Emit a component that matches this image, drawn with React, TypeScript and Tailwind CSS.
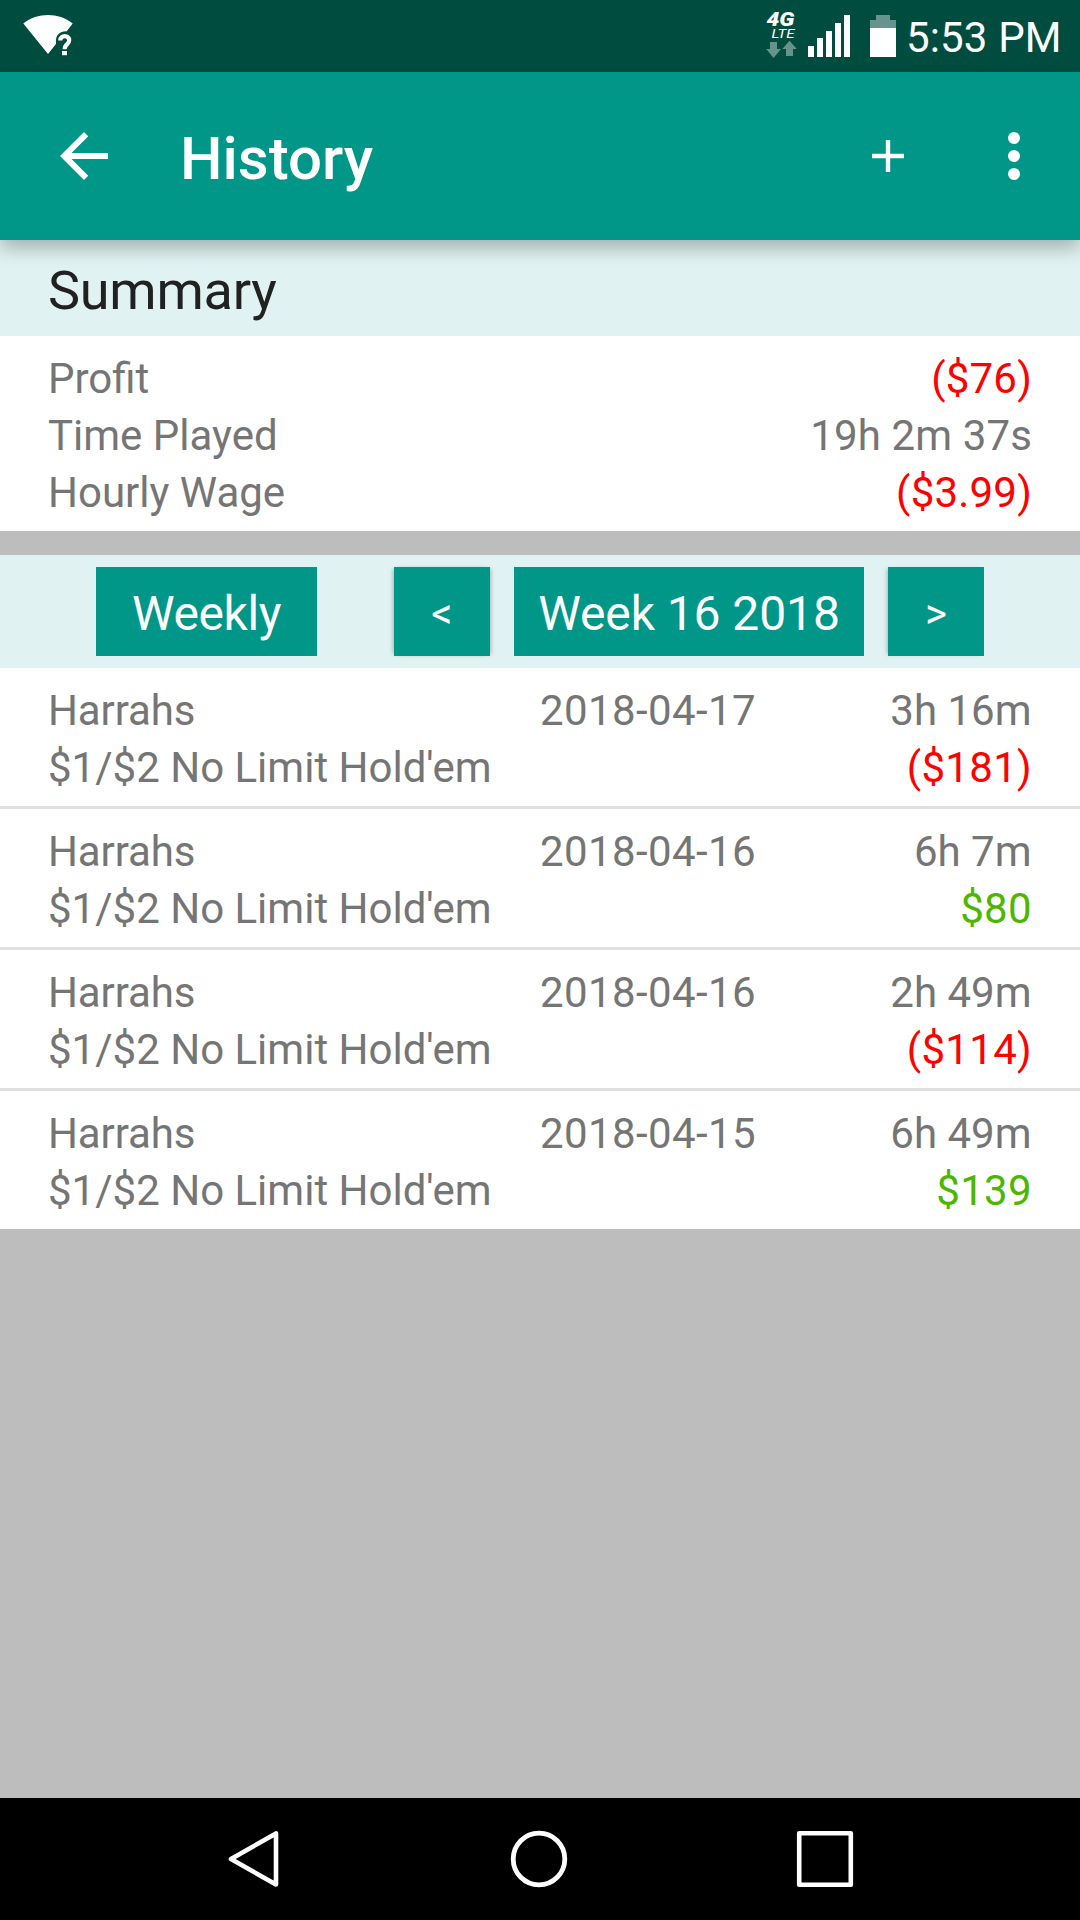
import React from "react";

type Session = { date: string; time: string; amount: string; win: boolean };

const sessions: Session[] = [
  { date: "2018-04-17", time: "3h 16m", amount: "($181)", win: false },
  { date: "2018-04-16", time: "6h 7m", amount: "$80", win: true },
  { date: "2018-04-16", time: "2h 49m", amount: "($114)", win: false },
  { date: "2018-04-15", time: "6h 49m", amount: "$139", win: true },
];

function StatusBar() {
  return (
    <div className="flex h-[72px] shrink-0 items-center bg-[#004d40] pl-5 text-white">
      <svg width="56" height="72" viewBox="20 0 56 72">
        <path
          d="M23.3 23.4C37.5 12.2 58.5 12.2 72.7 23.4L66.5 31.4C60.5 31 56 35 56 40.5V44L48 54Z"
          fill="currentColor"
        />
        <path d="M60.3 40.4C60.3 34.7 69.2 34.9 69.2 40.3C69.2 44.2 64.6 44.2 64.6 49.2" fill="none" stroke="currentColor" strokeWidth="4.2" />
        <rect x="62" y="51" width="5" height="4.2" fill="currentColor" />
      </svg>
      <svg className="ml-auto" width="84" height="72" viewBox="766 0 84 72">
        <text x="766.5" y="26" fill="currentColor" textLength="28" lengthAdjust="spacingAndGlyphs" className="font-[Roboto] text-[20px] font-black italic">4G</text>
        <text x="771.5" y="38" fill="currentColor" textLength="23" lengthAdjust="spacingAndGlyphs" className="font-[Roboto] text-[13.5px] italic">LTE</text>
        <path d="M770 42H777V49H781L773.5 58L766.3 49H770Z" fill="#66948c" />
        <path d="M786 56V49H782.3L789.5 40.7L796.8 49H793V56Z" fill="#66948c" />
        <path d="M808 46h6v11h-6ZM817 38h6v19h-6ZM826 31h6v26h-6ZM835 23h6v34h-6ZM844 15h6v42h-6Z" fill="currentColor" />
      </svg>
      <svg className="ml-5" width="26" height="72" viewBox="870 0 26 72">
        <path d="M876 15h14v5h6v8h-26v-8h6Z" fill="#66948c" />
        <rect x="870" y="28" width="26" height="29" fill="currentColor" />
      </svg>
      <span className="ml-[10px] w-[174px] pt-[3px] text-[42px] leading-[48px] tracking-[0.15px] whitespace-nowrap">5:53 PM</span>
    </div>
  );
}

function AppBar() {
  return (
    <header className="relative z-10 flex h-[168px] shrink-0 items-center bg-[#009688] pr-[30px] pl-12 text-white shadow-[0_8px_18px_rgba(0,0,0,0.27)]">
      <svg width="72" height="72" viewBox="0 0 24 24" fill="currentColor">
        <path d="M20 11H7.83l5.59-5.59L12 4l-8 8 8 8 1.41-1.41L7.83 13H20v-2z" />
      </svg>
      <h1 className="ml-[60px] pt-[6px] text-[60px] leading-[70px] font-medium">History</h1>
      <svg className="ml-auto" width="32" height="32" viewBox="0 0 32 32" fill="currentColor">
        <path d="M13.8 0h4.4v13.8H32v4.4H18.2V32h-4.4V18.2H0v-4.4h13.8Z" />
      </svg>
      <svg className="ml-[74px]" width="72" height="72" viewBox="0 0 72 72" fill="currentColor">
        <circle cx="36" cy="18" r="6" />
        <circle cx="36" cy="36" r="6" />
        <circle cx="36" cy="54" r="6" />
      </svg>
    </header>
  );
}

function SummaryRow({ label, value, loss }: { label: string; value: string; loss?: boolean }) {
  return (
    <div className="flex justify-between">
      <span>{label}</span>
      <span className={loss ? "tracking-[0.2px] text-[#ff0000]" : "tracking-[0.12px]"}>{value}</span>
    </div>
  );
}

function SessionRow({ date, time, amount, win }: Session) {
  return (
    <div className="grid h-[138px] grid-cols-[492px_1fr_auto] content-start bg-white px-12 pt-[14px] leading-[57px]">
      <span className="tracking-[-0.1px]">Harrahs</span>
      <span className="tracking-[0.4px]">{date}</span>
      <span className="pr-[0.5px] text-right">{time}</span>
      <span className="col-span-2">$1/$2 No Limit Hold'em</span>
      <span className={win ? "text-right tracking-[0.35px] text-[#4cb600]" : "text-right tracking-[0.3px] text-[#ff0000]"}>{amount}</span>
    </div>
  );
}

const arrowButton =
  "flex h-[89px] w-24 items-center justify-center bg-[#009688] pt-[5px] text-[42px] leading-none";

export default function App() {
  return (
    <div className="flex h-[1920px] w-[1080px] flex-col overflow-hidden bg-[#bdbdbd] font-[Roboto,sans-serif] text-[42px] text-[#757575]">
      <StatusBar />
      <AppBar />
      <h2 className="h-24 shrink-0 bg-[#e0f2f1] px-12 pt-[19px] text-[54px] leading-[64px] tracking-[-0.25px] text-[#212121]">Summary</h2>
      <section className="h-[195px] shrink-0 bg-white px-12 pt-[14px] leading-[57px]">
        <SummaryRow label="Profit" value="($76)" loss />
        <SummaryRow label="Time Played" value="19h 2m 37s" />
        <SummaryRow label="Hourly Wage" value="($3.99)" loss />
      </section>
      <div className="mt-6 flex h-[113px] shrink-0 items-center bg-[#e0f2f1] px-24 text-white">
        <button className="h-[89px] w-[221px] bg-[#009688] pt-[3px] text-[48px] leading-[57px] tracking-[-0.45px]">Weekly</button>
        <button className={`${arrowButton} ml-[77px] shadow-[-3px_0_4px_-2px_rgba(0,0,0,0.25),3px_0_4px_-2px_rgba(0,0,0,0.25)]`}>&lt;</button>
        <button className="ml-6 h-[89px] w-[350px] bg-[#009688] pt-[3px] text-[48px] leading-[57px] tracking-[-0.1px] whitespace-nowrap">Week 16 2018</button>
        <button className={`${arrowButton} ml-6 shadow-[-3px_0_4px_-2px_rgba(0,0,0,0.25)]`}>&gt;</button>
      </div>
      <section className="flex flex-col gap-[3px] bg-[#e0e0e0]">
        {sessions.map((s, i) => (
          <SessionRow key={i} {...s} />
        ))}
      </section>
      <nav className="mt-auto flex h-[122px] shrink-0 items-center bg-black pl-[226px] text-white">
        <svg width="56" height="60" viewBox="0 0 56 60" fill="none" stroke="currentColor" strokeWidth="4.6" strokeLinejoin="round">
          <path d="M50 4.5V55.5L5 30Z" />
        </svg>
        <svg className="ml-[227px]" width="60" height="60" viewBox="0 0 60 60" fill="none" stroke="currentColor" strokeWidth="4.8">
          <circle cx="30" cy="30" r="25.8" />
        </svg>
        <svg className="ml-[226px]" width="60" height="60" viewBox="0 0 60 60" fill="none" stroke="currentColor" strokeWidth="4.6" strokeLinejoin="round">
          <rect x="4.2" y="4.2" width="51.6" height="51.6" />
        </svg>
      </nav>
    </div>
  );
}
